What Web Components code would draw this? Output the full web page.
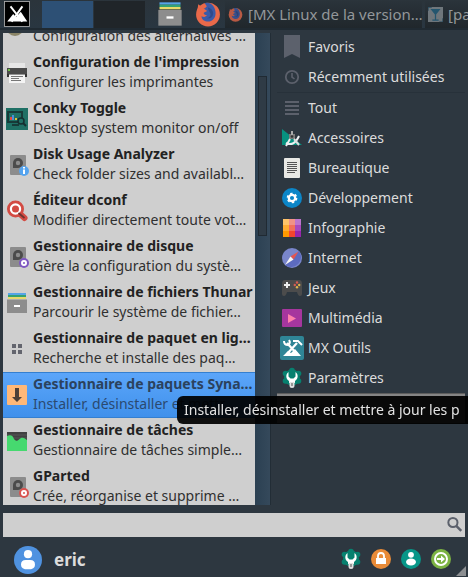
<!DOCTYPE html>
<html lang="fr">
<head>
  <meta charset="UTF-8">
  <meta name="viewport" content="width=device-width, initial-scale=1.0">
  <title>Menu Whisker</title>
  <style>
    html, body { height: 100%; }
    body {
      margin: 0;
      display: flex;
      flex-direction: column;
      overflow: hidden;
      background: #2d3740;
      color: #dcdcdc;
      font: 14px/20px "Noto Sans", sans-serif;
    }
  </style>
</head>
<body>
  <desk-panel>
    <task-button icon="firefox">[MX Linux de la version…</task-button>
    <task-button icon="glass">[pa</task-button>
  </desk-panel>
  <whisker-menu>
    <app-list slot="apps">
      <app-item icon="alternatives" name="Galternatives">Configuration des alternatives …</app-item>
      <app-item icon="printer" name="Configuration de l'impression">Configurer les imprimantes</app-item>
      <app-item icon="conky" name="Conky Toggle">Desktop system monitor on/off</app-item>
      <app-item icon="diskinfo" name="Disk Usage Analyzer">Check folder sizes and availabl…</app-item>
      <app-item icon="dconf" name="Éditeur dconf">Modifier directement toute vot…</app-item>
      <app-item icon="diskgear" name="Gestionnaire de disque">Gère la configuration du systè…</app-item>
      <app-item icon="files" name="Gestionnaire de fichiers Thunar">Parcourir le système de fichier…</app-item>
      <app-item icon="grid" name="Gestionnaire de paquet en lig…">Recherche et installe des paq…</app-item>
      <app-item icon="package" name="Gestionnaire de paquets Syna…" selected>Installer, désinstaller et mettr…<menu-tip slot="tip">Installer, désinstaller et mettre à jour les p</menu-tip></app-item>
      <app-item icon="tasks" name="Gestionnaire de tâches">Gestionnaire de tâches simple…</app-item>
      <app-item icon="gparted" name="GParted">Crée, réorganise et supprime …</app-item>
    </app-list>
    <menu-category slot="categories" icon="bookmark">Favoris</menu-category>
    <menu-category slot="categories" icon="clock">Récemment utilisées</menu-category>
    <menu-category slot="categories" icon="lines" separated>Tout</menu-category>
    <menu-category slot="categories" icon="accessories">Accessoires</menu-category>
    <menu-category slot="categories" icon="office">Bureautique</menu-category>
    <menu-category slot="categories" icon="develop">Développement</menu-category>
    <menu-category slot="categories" icon="graphics">Infographie</menu-category>
    <menu-category slot="categories" icon="internet">Internet</menu-category>
    <menu-category slot="categories" icon="games">Jeux</menu-category>
    <menu-category slot="categories" icon="media">Multimédia</menu-category>
    <menu-category slot="categories" icon="mxtools">MX Outils</menu-category>
    <menu-category slot="categories" icon="settings">Paramètres</menu-category>
    <menu-category slot="categories" active></menu-category>
    <menu-search slot="search"></menu-search>
    <user-bar slot="user">eric</user-bar>
  </whisker-menu>

  <script>
    const drive = `<rect x="5" y="2" width="16" height="20" rx="1" fill="#8c8c8c"/><path d="M8 15V10a5 5 0 1 1 5 5z" fill="#4b4b4b"/><circle cx="13" cy="10" r="2.2" fill="#8c8c8c"/>`;
    const wrench = `<g fill="#07806f"><circle cx="12" cy="11.500" r="8"/><circle cx="12" cy="4.500" r="2.800"/><circle cx="5.500" cy="7.500" r="2.800"/><circle cx="18.500" cy="7.500" r="2.800"/><circle cx="5.500" cy="15" r="2.800"/><circle cx="18.500" cy="15" r="2.800"/></g><path d="M8.500 6v4.500l2 2h3l2-2V6c3 2 3 7-.5 9v2H9v-2C5.500 13 5.500 8 8.500 6z" fill="#fff"/><path d="M9.500 16h5v3.500a2.500 2.500 0 0 1-5 0z" fill="#e0e0e0"/><path d="M11.300 17h1.400v3h-1.400z" fill="#777"/>`;
    const fox = `<circle cx="12" cy="12.500" r="11" fill="#e9694a"/><path d="M2 10L3 3l4 3z" fill="#e9694a"/><path d="M9 2c5-2 10 3 10 9 0 5-3 8-7 8-3 0-6-2-6-5 2 1 4 1 5-1-2 0-3-1-3-2 1-1 3-1 3-2L8 7c2 0 2-2 3-2z" fill="#3b5ba9"/><path d="M12 6c4 1 6 5 4 8-1 2-3 2-5 2 3-1 4-3 3-5-1-2-2-3-2-5z" fill="#304a8c"/>`;
    const icons = {
      mx: `<rect x=".5" y=".5" width="23" height="23" fill="#000" stroke="#aaa" stroke-width=".8"/><path d="M3 19l5.500-7 2.500 3 4.500-5 6 9z" fill="#fff"/><path d="M6 5l11 14M17 5L7 19" stroke="#fff" stroke-width="1.800" fill="none"/>`,
      firefox: fox,
      glass: `<rect width="24" height="24" fill="#888f94"/><path d="M4 3h16l-7 9v8h4v2H7v-2h4v-8z" fill="#246382"/><path d="M0 6V0h6M24 18v6h-6" fill="none" stroke="#28556c" stroke-width="2"/>`,
      alternatives: `<circle cx="10" cy="12" r="9" fill="#8b8568"/><circle cx="9" cy="11" r="6" fill="#d6cda0"/>`,
      printer: `<path d="M4 2h16v6H4z" fill="#e6e6e6"/><path d="M2 7h20v9H2z" fill="#4a4a4a"/><path d="M2 13h20v3H2z" fill="#333"/><path d="M4 13.500h16v8.500H4z" fill="#f4f4f4"/><path d="M6 15.500h12M6 17.500h8M6 19.500h10" stroke="#777"/><circle cx="4" cy="9" r="1.100" fill="#79df45"/>`,
      conky: `<path d="M1 1h22v22H1z" fill="#1f7065"/><path d="M3 5h14v10H3zM7 18h7" fill="none" stroke="#173b39" stroke-width="2"/><path d="M5 10h2v3H5z" fill="#e24b3b"/><path d="M7 8h2v5H7z" fill="#4b8ed9"/><path d="M10 11h2v2h-2z" fill="#e0bf35"/><circle cx="16" cy="14" r="3" fill="#1f7065" stroke="#152f30" stroke-width="1.500"/><path d="M18 16l3 3" stroke="#152f30" stroke-width="2"/>`,
      diskinfo: `${drive}<circle cx="19" cy="18" r="5" fill="#55a4ef"/><path d="M18 14h2v1.500h-2zM18 16.500h2V21h-2z" fill="#fff"/>`,
      diskgear: `${drive}<circle cx="19" cy="18" r="5" fill="#7e57c2"/><circle cx="19" cy="18" r="2" fill="none" stroke="#fff" stroke-width="2"/>`,
      gparted: `${drive}<circle cx="19" cy="18" r="5" fill="#d9534f"/><circle cx="19" cy="18" r="2" fill="none" stroke="#fff" stroke-width="2"/>`,
      dconf: `<path d="M14 14l5.500 5" stroke="#d34b43" stroke-width="6" stroke-linecap="round"/><circle cx="10.500" cy="10" r="8.500" fill="#d34b43"/><circle cx="10.500" cy="10" r="4.600" fill="#d34b43" stroke="#fff" stroke-width="2.200"/><path d="M13.500 14l6 5" stroke="#6c3430" stroke-width="1.800"/>`,
      files: `<path d="M3 2h18v2H3z" fill="#56a4e8"/><path d="M3 4h18v2H3z" fill="#34a174"/><path d="M3 6h18v2H3z" fill="#e8d96a"/><path d="M2 8.500h20V22H2z" fill="#8d8d8d"/><path d="M9 14h6v2H9z" fill="#fff"/>`,
      grid: `<path d="M7 7h4v4H7zM13 7h4v4h-4zM7 13h4v4H7zM13 13h4v4h-4z" fill="#63656e"/>`,
      package: `<rect x="2" y="2" width="20" height="20" rx="1" fill="#ffb878"/><path d="M10 5h4v9h3l-5 5-5-5h3z" fill="#4d4038"/>`,
      tasks: `<path d="M2 3h20v12H2z" fill="#414141"/><path d="M2 6h20M2 9h20" stroke="#565656"/><path d="M2 7c4-2 6 0 7 3 3 4 5 0 7-1 3-1 4 1 6 2v11H2z" fill="#46d96f"/>`,
      bookmark: `<path d="M4 0h16v23l-8-4-8 4z" fill="#5c616c"/>`,
      clock: `<circle cx="12" cy="12" r="6.200" fill="none" stroke="#5c616c" stroke-width="1.800"/><path d="M12 8v4l2.500 2" fill="none" stroke="#5c616c" stroke-width="1.600"/>`,
      lines: `<path d="M5 6h14M5 10h14M5 14h14M5 18h14" stroke="#5c616c" stroke-width="2"/>`,
      accessories: `<path d="M2 3l20 16H2z" fill="#07917f"/><path d="M9 8h6v5H9z" fill="#7b7b7b"/><path d="M11 5h2v4h-2z" fill="#aaa"/><path d="M10 13l-4 7M6 17q8 4 13-7" fill="none" stroke="#eceff1" stroke-width="2"/><path d="M14 13l5 6" stroke="#ddd" stroke-width="2"/><circle cx="12" cy="10.500" r="1.300" fill="#333"/>`,
      office: `<rect x="4" y="2" width="16" height="20" rx="1" fill="#e9e9e5"/><path d="M7 6.500h10M7 8.500h10M7 10.500h10M7 12.500h10M7 14.500h10M7 16.500h8" stroke="#555"/>`,
      develop: `<circle cx="12" cy="12" r="10" fill="#0c86c8"/><circle cx="12" cy="12" r="3.200" fill="none" stroke="#fff" stroke-width="2.300"/><circle cx="12" cy="12" r="4.600" fill="none" stroke="#fff" stroke-width="1.500" stroke-dasharray="2.400 2.417"/>`,
      graphics: `<path d="M3 3h6v6H3z" fill="#ffc46a"/><path d="M9 3h6v6H9z" fill="#f29286"/><path d="M15 3h6v6h-6z" fill="#bd75cd"/><path d="M3 9h6v6H3z" fill="#ffad33"/><path d="M9 9h6v6H9z" fill="#f36f5a"/><path d="M15 9h6v6h-6z" fill="#aa48bd"/><path d="M3 15h6v6H3z" fill="#ff9900"/><path d="M9 15h6v6H9z" fill="#f4452e"/><path d="M15 15h6v6h-6z" fill="#9726ac"/>`,
      internet: `<circle cx="12" cy="12" r="10" fill="#7986cb"/><path d="M19 5a10 10 0 0 1-14 14z" fill="#5c6bc0"/><path d="M18.500 5.500l-5 8-3-3z" fill="#e5554f"/><path d="M5 19l5.500-8.500 3 3z" fill="#f4f4f4"/>`,
      games: `<path d="M5 4h14q3 0 3 4v10q0 2-2 2-2 0-3-4H7q-1 4-3 4-2 0-2-2V8q0-4 3-4z" fill="#4c4c4c"/><path d="M7 6v6M4 9h6" stroke="#eee" stroke-width="2"/><g fill="#d95c50"><circle cx="17" cy="6.500" r="1.200"/><circle cx="14.800" cy="9" r="1.200"/></g><circle cx="19.200" cy="9" r="1.200" fill="#e2b44a"/><circle cx="17" cy="11.300" r="1.200" fill="#e2b44a"/>`,
      media: `<rect x="2" y="3" width="20" height="18" rx="1" fill="#a6369e"/><path d="M8 8l8 4.500-8 4.500z" fill="#ff80ab"/>`,
      mxtools: `<rect x="0" y="0" width="24" height="24" rx="2" fill="#2f8596"/><path d="M3 20l5-5 3 2 4-4 6 7z" fill="#fff"/><path d="M7 7l10 11M17 7L7 18" stroke="#fff" stroke-width="2.300"/><path d="M4 5q0 4 4 4 3-2 1-5M13 5l5 0 4 4" fill="none" stroke="#fff" stroke-width="2"/>`,
      settings: wrench,
      lock: `<circle cx="12" cy="12" r="10" fill="#e98b37"/><path d="M7 11h10v6H7z" fill="#fff"/><path d="M9 11V9a3 3 0 0 1 6 0v2" fill="none" stroke="#fff" stroke-width="1.800"/>`,
      person: `<circle cx="12" cy="12" r="10" fill="#079688"/><circle cx="12" cy="7.800" r="2.900" fill="#fff"/><ellipse cx="12" cy="15" rx="5" ry="3.500" fill="#fff"/>`,
      logout: `<circle cx="12" cy="12" r="10" fill="#7cb342"/><circle cx="12" cy="12" r="6" fill="none" stroke="#fff" stroke-width="2"/><path d="M8 11h4V8.500l4 3.500-4 3.500V13H8z" fill="#fff"/>`,
      avatar: `<circle cx="12" cy="12" r="12" fill="#4f92e0"/><circle cx="12" cy="7" r="3.500" fill="#fff"/><path d="M6 16q0-4 4-4h4q4 0 4 4 0 4-6 4t-6-4z" fill="#fff"/>`,
      search: `<circle cx="9.500" cy="9" r="5.500" fill="none" stroke="#5c616c" stroke-width="2.400"/><path d="M13.500 13l6 6" stroke="#5c616c" stroke-width="3"/>`,
      grip: `<path d="M24 0v24H0z" fill="#8c8f92"/>`,
    };

    class MenuIcon extends HTMLElement {
      constructor() {
        super();
        this.attachShadow({mode: 'open'});
      }
      connectedCallback() {
        this.shadowRoot.innerHTML = `
          <style>
            :host { display: block; flex: none; width: 24px; height: 24px; }
            svg { display: block; width: 100%; height: 100%; }
          </style>
          <svg viewBox="0 0 24 24" aria-hidden="true">${icons[this.getAttribute('name')] || ''}</svg>`;
      }
    }
    customElements.define('menu-icon', MenuIcon);

    class TaskButton extends HTMLElement {
      constructor() {
        super();
        this.attachShadow({mode: 'open'}).innerHTML = `
          <style>
            :host { display: block; flex: none; }
            button {
              display: flex; align-items: center; gap: 5px;
              width: 197px; height: 27px; padding: 0 0 0 3px; border: 0;
              background: linear-gradient(#2a333a, #20272c);
              color: #93979a; font: inherit; font-size: 15px; white-space: nowrap; overflow: hidden;
            }
            menu-icon { width: 15px; height: 15px; opacity: .75; }
          </style>
          <button><menu-icon name="${this.getAttribute('icon')}"></menu-icon><slot></slot></button>`;
      }
    }
    customElements.define('task-button', TaskButton);

    class DeskPanel extends HTMLElement {
      constructor() {
        super();
        this.attachShadow({mode: 'open'}).innerHTML = `
          <style>
            :host {
              display: flex; align-items: center; flex: none; height: 28px; overflow: hidden;
              background: linear-gradient(#2b343b, #293641); border-bottom: 2px solid #202a32;
            }
            button { flex: none; display: block; padding: 0; border: 0; background: none; }
            .start { margin: 0 11px 0 3px; padding: 0 1px; }
            .start menu-icon { width: 26px; height: 26px; }
            .desk { width: 51px; height: 27px; margin-right: 1px; background: #202529; }
            .desk.on { background: #2d5075; }
            .files { margin-left: 10px; }
            .files menu-icon { width: 28px; height: 28px; }
            .fox { margin: 0 4px 0 11px; }
            .fox menu-icon { width: 26px; height: 26px; }
            nav { display: flex; gap: 3px; }
          </style>
          <button class="start" aria-label="Menu"><menu-icon name="mx"></menu-icon></button>
          <button class="desk on" aria-label="1"></button>
          <button class="desk" aria-label="2"></button>
          <button class="files" aria-label="Thunar"><menu-icon name="files"></menu-icon></button>
          <button class="fox" aria-label="Firefox"><menu-icon name="firefox"></menu-icon></button>
          <nav><slot></slot></nav>`;
      }
    }
    customElements.define('desk-panel', DeskPanel);

    class WhiskerMenu extends HTMLElement {
      constructor() {
        super();
        this.attachShadow({mode: 'open'}).innerHTML = `
          <style>
            :host { display: flex; flex-direction: column; flex: 1; min-height: 0; padding: 2px 3px 0; }
            main { display: flex; flex: 1; min-height: 0; margin-bottom: 8px; }
            nav { flex: 1; min-width: 0; padding-left: 6px; }
            ::slotted(app-list) { flex: 0 0 58%; min-width: 0; margin-top: 1px; }
          </style>
          <main>
            <slot name="apps"></slot>
            <nav><slot name="categories"></slot></nav>
          </main>
          <slot name="search"></slot>
          <slot name="user"></slot>`;
      }
    }
    customElements.define('whisker-menu', WhiskerMenu);

    class AppItem extends HTMLElement {
      constructor() {
        super();
        this.attachShadow({mode: 'open'}).innerHTML = `
          <style>
            :host { display: block; position: relative; }
            button {
              display: flex; align-items: center; gap: 4px;
              width: 100%; height: 46px; padding: 0 0 0 2px;
              border: 0; background: none; color: #303030;
              font: inherit; text-align: left; white-space: nowrap;
            }
            :host([selected]) button {
              background: linear-gradient(#5ca6fa, #3f90eb);
              box-shadow: inset 0 1px #347fd0, inset 0 -1px #347fd0;
              color: #2b4a70;
            }
            span { display: block; min-width: 0; padding-bottom: 2px; overflow: hidden; }
            b { display: block; color: #222; }
            :host([selected]) b { color: #2b425d; }
          </style>
          <button>
            <menu-icon name="${this.getAttribute('icon')}"></menu-icon>
            <span><b>${this.getAttribute('name')}</b><slot></slot></span>
          </button>
          <slot name="tip"></slot>`;
      }
    }
    customElements.define('app-item', AppItem);

    // the tip hangs over the row and runs off the right of the screen
    class MenuTip extends HTMLElement {
      constructor() {
        super();
        this.attachShadow({mode: 'open'}).innerHTML = `
          <style>
            :host {
              position: fixed; left: 177px; top: 396px; right: -8px; z-index: 2;
              box-sizing: border-box; padding: 4px 7px; border-radius: 6px;
              background: rgba(0, 0, 0, .93); color: #e2e2e2; white-space: nowrap;
            }
          </style>
          <slot></slot>`;
      }
    }
    customElements.define('menu-tip', MenuTip);

    class AppList extends HTMLElement {
      constructor() {
        super();
        this.attachShadow({mode: 'open'}).innerHTML = `
          <style>
            :host { display: flex; min-height: 0; box-sizing: border-box; border-right: 1px solid #222d36; }
            .rows { flex: 1; min-width: 0; overflow: hidden; background: #cfcfcf; }
            .bar {
              display: flex; flex-direction: column; flex: none; width: 9px; padding: 0 3px;
              background: linear-gradient(90deg, #2b4052, #35495b);
            }
            .thumb { flex: 159; box-sizing: border-box; border: 1px solid #202a33; background: #2f3b46; }
            .before { flex: 43; }
            .after { flex: 270; }
          </style>
          <div class="rows"><slot></slot></div>
          <div class="bar"><div class="before"></div><div class="thumb"></div><div class="after"></div></div>`;
      }
      connectedCallback() {
        // the first row is scrolled partly out of view
        requestAnimationFrame(() => { this.shadowRoot.querySelector('.rows').scrollTop = 29; });
      }
    }
    customElements.define('app-list', AppList);

    class MenuCategory extends HTMLElement {
      constructor() {
        super();
        this.attachShadow({mode: 'open'}).innerHTML = `
          <style>
            :host { display: block; }
            :host([separated]) { border-top: 1px solid #27313a; }
            button {
              display: flex; align-items: center; gap: 4px;
              width: 100%; height: 30px; padding: 0 3px;
              border: 0; background: none; color: inherit; font: inherit; white-space: nowrap;
            }
            :host([active]) button { background: #858585; border-top: 1px solid #5d5d5d; }
          </style>
          <button><menu-icon name="${this.getAttribute('icon') || ''}"></menu-icon><slot></slot></button>`;
      }
    }
    customElements.define('menu-category', MenuCategory);

    class MenuSearch extends HTMLElement {
      constructor() {
        super();
        this.attachShadow({mode: 'open'}).innerHTML = `
          <style>
            :host { display: block; flex: none; }
            label { display: flex; align-items: center; height: 24px; background: #cfcfcf; }
            input { flex: 1; min-width: 0; border: 0; outline: 0; background: none; color: #303030; font: inherit; }
            menu-icon { width: 20px; height: 20px; }
          </style>
          <label><input type="text" aria-label="Rechercher"><menu-icon name="search"></menu-icon></label>`;
      }
    }
    customElements.define('menu-search', MenuSearch);

    class UserBar extends HTMLElement {
      constructor() {
        super();
        this.attachShadow({mode: 'open'}).innerHTML = `
          <style>
            :host { display: flex; align-items: center; flex: none; height: 40px; padding-left: 11px; }
            .avatar { width: 28px; height: 28px; margin: 5px 12px 0 0; }
            b { flex: 1; margin-top: 5px; font-size: 17px; }
            .actions { display: flex; gap: 6px; margin-top: 4px; }
            button { padding: 0; border: 0; background: none; }
            .grip { align-self: flex-end; width: 10px; height: 10px; margin: 0 -1px 1px 3px; }
          </style>
          <menu-icon class="avatar" name="avatar"></menu-icon>
          <b><slot></slot></b>
          <div class="actions">
            <button aria-label="Paramètres"><menu-icon name="settings"></menu-icon></button>
            <button aria-label="Verrouiller"><menu-icon name="lock"></menu-icon></button>
            <button aria-label="Utilisateur"><menu-icon name="person"></menu-icon></button>
            <button aria-label="Déconnexion"><menu-icon name="logout"></menu-icon></button>
          </div>
          <menu-icon class="grip" name="grip"></menu-icon>`;
      }
    }
    customElements.define('user-bar', UserBar);
  </script>
</body>
</html>
